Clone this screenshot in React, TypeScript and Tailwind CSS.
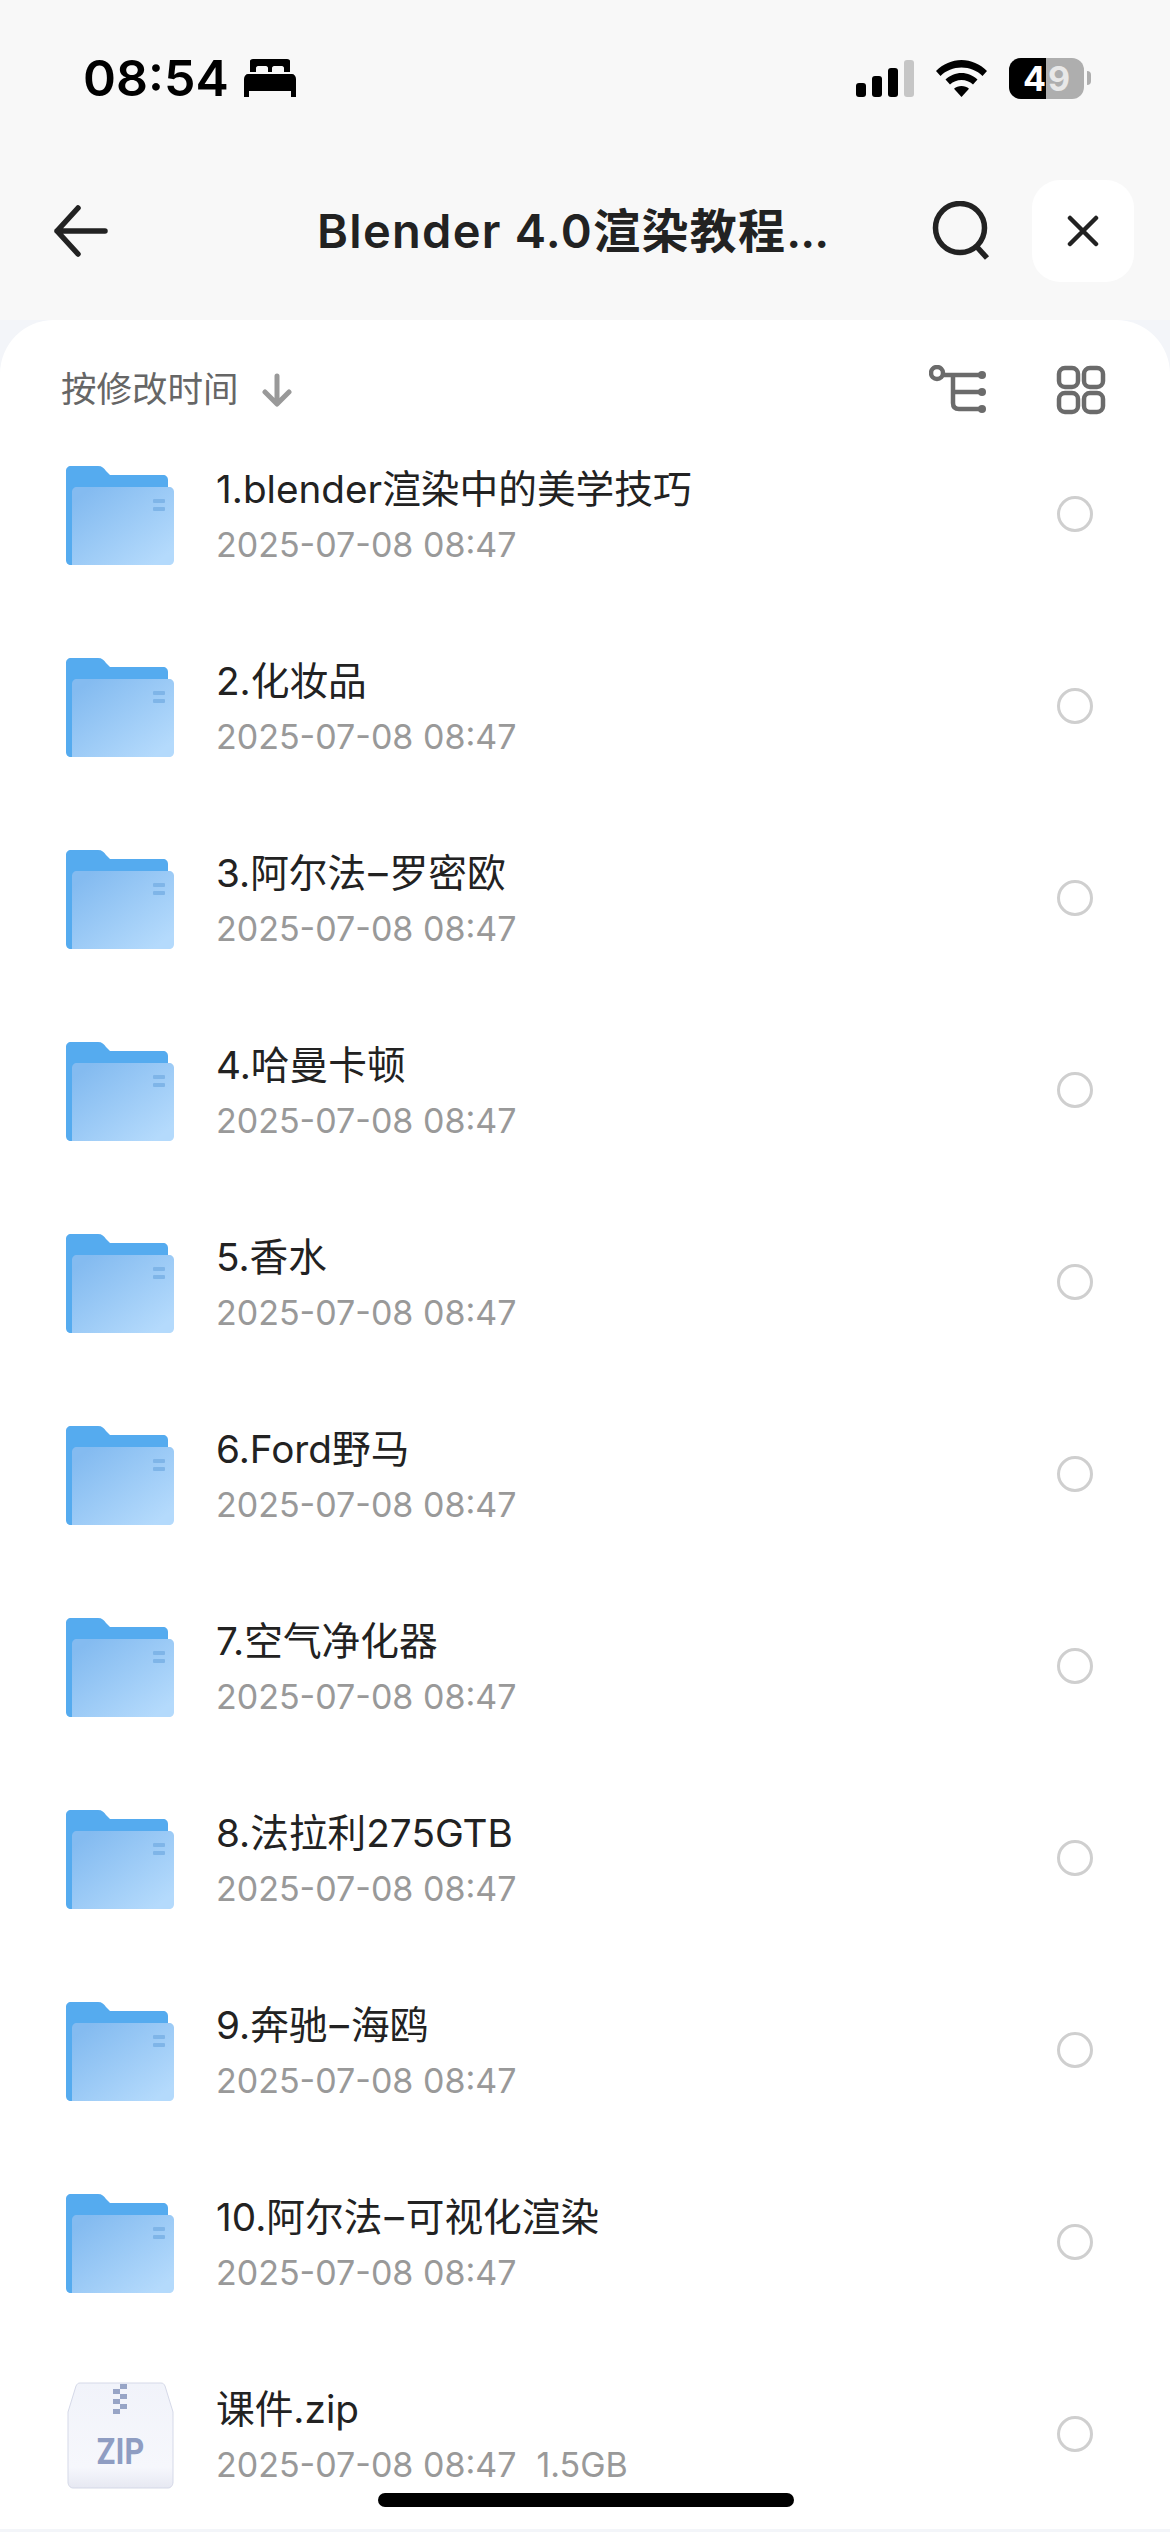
const font = "font-['Inter','Noto_Sans_CJK_SC',sans-serif]";

const folders = [
  "1.blender渲染中的美学技巧",
  "2.化妆品",
  "3.阿尔法–罗密欧",
  "4.哈曼卡顿",
  "5.香水",
  "6.Ford野马",
  "7.空气净化器",
  "8.法拉利275GTB",
  "9.奔驰–海鸥",
  "10.阿尔法–可视化渲染",
];

function FolderIcon() {
  return (
    <svg width="108" height="99" viewBox="0 0 108 99" className="ml-[66px] shrink-0 translate-y-[2px]">
      <defs>
        <linearGradient id="folder-front" x1="0.1" y1="0.1" x2="0.9" y2="0.9">
          <stop offset="0" stopColor="#84bbf0" />
          <stop offset="1" stopColor="#b4daFC" />
        </linearGradient>
      </defs>
      <path d="M5 0H32C36 0 38 2 40 5L44 9H97C100 9 102 11 102 14V30H6V99H5C2 99 0 97 0 94V5C0 2 2 0 5 0Z" fill="#55abef" />
      <path d="M6 26C6 23 8 21 11 21H103C106 21 108 23 108 26V94C108 97 106 99 103 99H6C6 99 6 99 6 99Z" fill="url(#folder-front)" />
      <rect x="87" y="33" width="12" height="4" rx="1" fill="#7fb5e8" />
      <rect x="87" y="41" width="12" height="4" rx="1" fill="#7fb5e8" />
    </svg>
  );
}

function ZipIcon() {
  return (
    <div className="relative ml-[67px] h-[107px] w-[107px] shrink-0 translate-y-[2px]">
      <svg width="107" height="107" viewBox="0 0 107 107" className="block">
        <defs>
          <linearGradient id="zip-body" x1="0" y1="0" x2="0" y2="1">
            <stop offset="0" stopColor="#f1f3fa" />
            <stop offset="0.8" stopColor="#f6f7fc" />
            <stop offset="1" stopColor="#e6e8f2" />
          </linearGradient>
        </defs>
        <path d="M13 1H94C96 1 97 2 98 4L106 30V100C106 103 104 106 101 106H6C3 106 1 103 1 100V30L9 4C10 2 11 1 13 1Z" fill="url(#zip-body)" stroke="#d5d9e8" strokeWidth="1" />
        {[2, 12, 22].map((y) => (
          <rect key={y} x="53" y={y} width="7" height="5" fill="#98a5c6" />
        ))}
        {[7, 17, 27].map((y) => (
          <rect key={y} x="46" y={y} width="7" height="5" fill="#98a5c6" />
        ))}
      </svg>
      <span className="absolute left-0 right-0 top-[53px] scale-x-[0.85] text-center font-['Roboto',sans-serif] text-[36px] leading-[34px] font-bold text-[#8f9dc2]">
        ZIP
      </span>
    </div>
  );
}

function Row({ name, size, zip }: { name: string; size?: string; zip?: boolean }) {
  const [head, tail] = name.split("–");
  return (
    <div className="flex h-[192px] items-center">
      {zip ? <ZipIcon /> : <FolderIcon />}
      <div className="ml-[43px] flex min-w-0 flex-1 flex-col pt-[6px]">
        <div className="-ml-[1px] text-[38.700px] leading-[52px] text-[#222]">
          {head}
          {tail && <span className="mx-[2px]">–</span>}
          {tail}
        </div>
        <div className="-ml-[1px] mt-[6px] flex gap-[20px] text-[34px] leading-[48px] text-[#999]">
          <span>2025-07-08 08:47</span>
          {size && <span>{size}</span>}
        </div>
      </div>
      <div className="mr-[77px] h-[36px] w-[36px] translate-y-[1px] rounded-full border-[3px] border-[#cfcfcf]" />
    </div>
  );
}

export default function App() {
  return (
    <div className={`relative h-[2532px] w-[1170px] overflow-hidden bg-[#f3f5f9] ${font}`}>
      <div className="h-[320px] bg-[#f8f8f8]">
        {/* status bar */}
        <div className="flex items-center pl-[83px] pr-[79px] pt-[52px]">
          <span className="text-[50px] leading-[52px] font-semibold text-black">08:54</span>
          <svg width="52" height="38" viewBox="0 0 52 38" className="ml-[15px]">
            <path d="M6 2C6 1 7 0 9 0H43C45 0 46 1 46 2V13H40V9C40 8 39 7 38 7H30C29 7 28 8 28 9V13H24V9C24 8 23 7 22 7H14C13 7 12 8 12 9V13H6Z" />
            <path d="M4 15H48C50 15 52 17 52 20V38H47V32H5V38H0V20C0 17 2 15 4 15Z" />
          </svg>
          <div className="ml-auto flex items-end gap-[6px]">
            <div className="h-[14px] w-[10px] rounded-[3px] bg-black" />
            <div className="h-[21px] w-[10px] rounded-[3px] bg-black" />
            <div className="h-[29px] w-[10px] rounded-[3px] bg-black" />
            <div className="h-[37px] w-[10px] rounded-[3px] bg-[#c6c6c6]" />
          </div>
          <svg width="51" height="37" viewBox="0 0 51 37" className="ml-[22px]">
            <path d="M25.5 0C35 0 44 4 51 11L46.500 16C41 10.500 33.500 7.500 25.500 7.500C17.500 7.500 10 10.500 4.500 16L0 11C7 4 16 0 25.500 0Z" />
            <path d="M25.500 13C31.500 13 37 15.500 41.500 19.500L37 24.500C33.800 21.700 29.800 20 25.500 20C21.200 20 17.200 21.700 14 24.500L9.500 19.500C14 15.500 19.500 13 25.500 13Z" />
            <path d="M25.500 26C28.500 26 31 27 33 28.700L25.500 37L18 28.700C20 27 22.500 26 25.500 26Z" />
          </svg>
          <div className="ml-[22px] flex items-center">
            <div className="relative flex h-[41px] w-[75px] rounded-[12px] bg-[#aeaeae]">
              <div className="h-full w-[37px] rounded-l-[12px] bg-black" />
              <span className="absolute inset-0 flex items-center justify-center gap-[2px] text-[34px] leading-[41px] font-bold text-white">
                <span>4</span>
                <span className="text-[#e8e8e8]">9</span>
              </span>
            </div>
            <div className="ml-[3px] h-[14px] w-[4px] rounded-r-full bg-[#aeaeae]" />
          </div>
        </div>
        {/* nav bar */}
        <div className="relative mt-[76px] flex h-[102px] items-center">
          <svg width="56" height="52" viewBox="0 0 56 52" fill="none" stroke="#222" strokeWidth="5.500" strokeLinecap="round" strokeLinejoin="round" className="ml-[53px]">
            <path d="M52 26H4M25 3L4 26L25 49" />
          </svg>
          <div className="ml-[208px] text-[47px] font-semibold tracking-[1.300px] whitespace-nowrap text-[#222]">
            Blender 4.0渲染教程<span className="tracking-[-1px]">...</span>
          </div>
          <svg width="60" height="60" viewBox="0 0 60 60" fill="none" stroke="#222" strokeWidth="5.500" className="ml-auto">
            <circle cx="29" cy="27" r="24.500" />
            <path d="M46 46L56 57" />
          </svg>
          <div className="ml-[41px] mr-[36px] flex h-[102px] w-[102px] items-center justify-center rounded-[28px] bg-white">
            <svg width="32" height="32" viewBox="0 0 32 32" fill="none" stroke="#222" strokeWidth="4.500" strokeLinecap="round">
              <path d="M3 3L29 29M29 3L3 29" />
            </svg>
          </div>
        </div>
      </div>
      <div className="rounded-t-[54px] bg-white">
        <div className="flex h-[97px] items-start pt-[48px]">
          <span className="ml-[61px] text-[35.500px] leading-[44px] text-[#666]">按修改时间</span>
          <svg width="32" height="34" viewBox="0 0 32 34" fill="none" stroke="#999" strokeWidth="5" strokeLinecap="round" strokeLinejoin="round" className="ml-[22px] mt-[5px]">
            <path d="M16 3V30M4 19L16 31L28 19" />
          </svg>
          <svg width="60" height="50" viewBox="0 0 60 50" fill="none" stroke="#6b6b6b" strokeWidth="4.500" strokeLinecap="round" className="ml-auto mt-[-3px]">
            <circle cx="8" cy="8" r="6" />
            <path d="M14 10H52M24 10V38C24 42 26 44 30 44H52M24 27H52" />
            <circle cx="53" cy="10" r="4" fill="#6b6b6b" stroke="none" />
            <circle cx="53" cy="27" r="4" fill="#6b6b6b" stroke="none" />
            <circle cx="53" cy="44" r="4" fill="#6b6b6b" stroke="none" />
          </svg>
          <svg width="50" height="50" viewBox="0 0 50 50" fill="none" stroke="#6b6b6b" strokeWidth="4.500" className="ml-[67px] mr-[64px] mt-[-3px]">
            <rect x="3" y="3" width="19" height="19" rx="6" />
            <rect x="28" y="3" width="19" height="19" rx="6" />
            <rect x="3" y="28" width="19" height="19" rx="6" />
            <rect x="28" y="28" width="19" height="19" rx="6" />
          </svg>
        </div>
        {folders.map((name) => (
          <Row key={name} name={name} />
        ))}
        <Row name="课件.zip" size="1.5GB" zip />
      </div>
      <div className="absolute bottom-[25px] left-[378px] h-[14px] w-[416px] rounded-full bg-black" />
    </div>
  );
}
